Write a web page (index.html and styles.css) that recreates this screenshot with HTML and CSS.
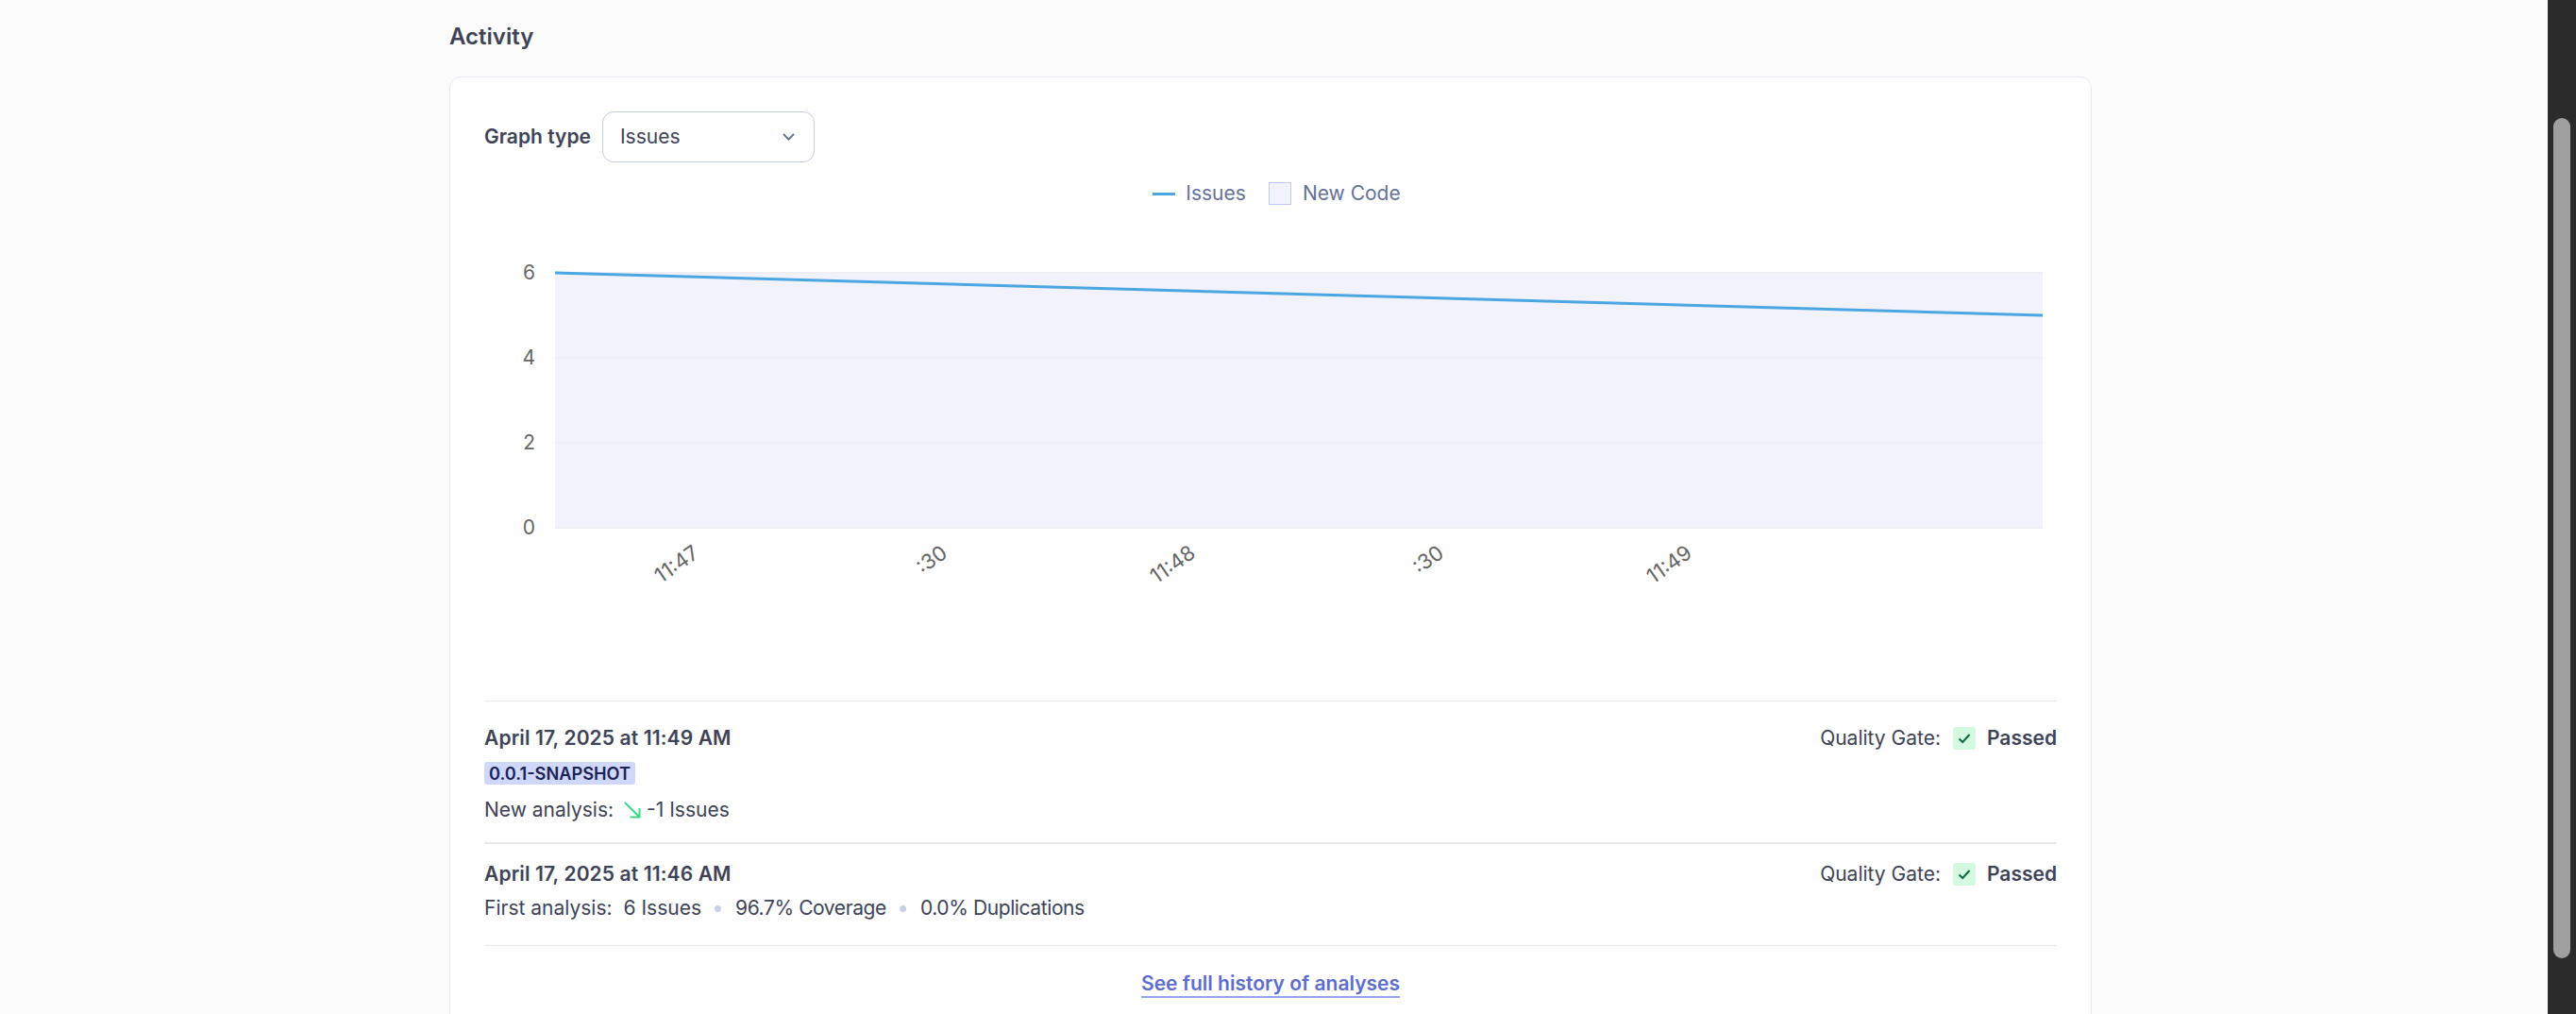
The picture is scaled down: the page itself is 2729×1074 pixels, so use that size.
FILE: index.html
```html
<!DOCTYPE html>
<html lang="en">
<head>
  <meta charset="UTF-8">
  <title>Activity</title>
  <link rel="stylesheet" href="styles.css">
</head>
<body>
  <main class="page">
    <h2 class="title">Activity</h2>
    <section class="card">
      <div class="graph-type">
        <label class="graph-label">Graph type</label>
        <div class="select">
          <span>Issues</span>
          <svg class="chevron" width="13" height="8" viewBox="0 0 13 8"><path d="M1 1 6.500 6.600 12 1" fill="none" stroke="#5f6f96" stroke-width="1.8"/></svg>
        </div>
      </div>

      <div class="legend">
        <span class="legend-line"></span>
        <span class="legend-text">Issues</span>
        <span class="legend-box"></span>
        <span class="legend-text">New Code</span>
      </div>

      <svg class="chart" width="1667" height="522" viewBox="0 0 1667 522">
        <rect x="75" y="69" width="1576" height="271" fill="#f1f2fc"/>
        <g stroke="#eeeef3" stroke-width="2">
          <line x1="75" y1="69" x2="1651" y2="69"/>
          <line x1="75" y1="159" x2="1651" y2="159"/>
          <line x1="75" y1="249" x2="1651" y2="249"/>
          <line x1="75" y1="339" x2="1651" y2="339"/>
        </g>
        <line x1="75" y1="69" x2="1651" y2="114" stroke="#4ba6e1" stroke-width="3"/>
        <g class="y-labels" text-anchor="end">
          <text x="54" y="76">6</text>
          <text x="54" y="166">4</text>
          <text x="54" y="256">2</text>
          <text x="54" y="346">0</text>
        </g>
        <g class="x-labels" text-anchor="end">
          <text transform="translate(229,369) rotate(-35)">11:47</text>
          <text transform="translate(492,369) rotate(-35)">:30</text>
          <text transform="translate(755,369) rotate(-35)">11:48</text>
          <text transform="translate(1018,369) rotate(-35)">:30</text>
          <text transform="translate(1281,369) rotate(-35)">11:49</text>
        </g>
      </svg>

      <ul class="analyses">
        <li class="analysis analysis-first">
          <div class="analysis-head">
            <strong class="analysis-date">April 17, 2025 at 11:49 AM</strong>
            <div class="gate">
              <span>Quality Gate:</span>
              <span class="gate-badge"><svg width="14" height="12" viewBox="0 0 14 12"><path d="M1.500 6.500 5.200 10 12.500 2" fill="none" stroke="#0f6b3e" stroke-width="2"/></svg></span>
              <strong>Passed</strong>
            </div>
          </div>
          <div class="version">0.0.1-SNAPSHOT</div>
          <div class="events events-new">
            <span>New analysis:</span>
            <svg class="trend" width="18" height="18" viewBox="0 0 18 18"><path d="M1 1 16.500 16.500M16.500 7V16.500H6.500" fill="none" stroke="#37d985" stroke-width="2"/></svg>
            <span>-1 Issues</span>
          </div>
        </li>
        <li class="analysis analysis-second">
          <div class="analysis-head">
            <strong class="analysis-date">April 17, 2025 at 11:46 AM</strong>
            <div class="gate">
              <span>Quality Gate:</span>
              <span class="gate-badge"><svg width="14" height="12" viewBox="0 0 14 12"><path d="M1.500 6.500 5.200 10 12.500 2" fill="none" stroke="#0f6b3e" stroke-width="2"/></svg></span>
              <strong>Passed</strong>
            </div>
          </div>
          <div class="events events-first">
            <span>First analysis:</span>
            <span>6 Issues</span>
            <i class="dot"></i>
            <span class="metric">96.7% Coverage</span>
            <i class="dot"></i>
            <span class="metric">0.0% Duplications</span>
          </div>
        </li>
      </ul>

      <div class="history">
        <a class="history-link" href="#">See full history of analyses</a>
      </div>
    </section>
  </main>

  <div class="scrollbar"><div class="scrollbar-thumb"></div></div>
</body>
</html>
```

FILE: styles.css
```css
html,
body {
  height: 100%;
}

body {
  margin: 0;
  display: flex;
  overflow: hidden;
  background-color: #fcfcfc;
  color: #3e4357;
  font-family: Inter, "Noto Sans", sans-serif;
  font-size: 21px;
  line-height: 30px;
}

.page {
  flex: 1;
  min-width: 0;
  padding: 0 483px 0 476px;
}

.title {
  margin: 0;
  padding: 21px 0 24px;
  font-size: 24px;
  line-height: 36px;
  font-weight: 600;
}

.card {
  height: 1100px;
  padding: 36px;
  background-color: #fff;
  border: 1px solid #e6e8f4;
  border-radius: 12px;
}

.graph-type {
  display: flex;
  align-items: center;
  gap: 12px;
}

.graph-label {
  font-weight: 600;
}

.select {
  width: 225px;
  height: 54px;
  box-sizing: border-box;
  padding: 0 20px 0 18px;
  display: flex;
  align-items: center;
  justify-content: space-between;
  border: 1px solid #c5cce6;
  border-radius: 12px;
}

.legend {
  margin-top: 18px;
  padding-left: 13px;
  display: flex;
  justify-content: center;
  align-items: center;
  color: #64719b;
}

.legend-line {
  width: 24px;
  height: 3px;
  background-color: #4ba6e1;
  margin-right: 11px;
}

.legend-box {
  width: 24px;
  height: 24px;
  box-sizing: border-box;
  margin: 0 12px 0 24px;
  background-color: #f1f2fc;
  border: 1px solid #bfc6fb;
}

.chart {
  display: block;
}

.y-labels text,
.x-labels text {
  font-family: Inter, sans-serif;
  font-size: 21px;
  fill: #666;
}

.x-labels text {
  font-size: 22px;
}

.analyses {
  list-style: none;
  margin: 0;
  padding: 0;
}

.analysis {
  border-top: 1px solid #e9e9ec;
}

.analysis-first {
  padding: 24px 0 19px;
}

.analysis-second {
  border-top-width: 2px;
  padding: 17px 0 24px;
  border-bottom: 1px solid #e9e9ec;
}

.analysis-head {
  display: flex;
  justify-content: space-between;
}

.analysis-head strong {
  font-weight: 600;
}

.analysis-date {
  letter-spacing: 0.13px;
}

.gate {
  display: flex;
  align-items: center;
}

.gate-badge {
  width: 24px;
  height: 24px;
  margin: 0 12px 0 13px;
  display: flex;
  align-items: center;
  justify-content: center;
  background-color: #d3f9e0;
  border-radius: 3px;
}

.version {
  width: fit-content;
  margin-top: 10px;
  padding: 0 5px;
  height: 24px;
  line-height: 24px;
  font-size: 18.200px;
  font-weight: 600;
  color: #1b2354;
  background-color: #d0d7fc;
  border-radius: 3px;
}

.events {
  display: flex;
  align-items: center;
}

.events-new {
  margin-top: 12px;
}

.events-first {
  margin-top: 6px;
}

.events-first span:first-child {
  margin-right: 12px;
}

.metric {
  letter-spacing: -0.4px;
}

.trend {
  margin: 0 6px 0 11px;
}

.dot {
  width: 7px;
  height: 7px;
  margin: 0 15px 0 14px;
  border-radius: 50%;
  background-color: #c9d0e4;
}

.history {
  margin-top: 25px;
  text-align: center;
}

.history-link {
  color: #5d6cd0;
  font-weight: 600;
  text-decoration: none;
  padding-bottom: 1px;
  border-bottom: 2px solid #96a4ee;
}

.scrollbar {
  flex: none;
  width: 30px;
  background-color: #2b2b2b;
  padding: 125px 6px 0;
  box-sizing: border-box;
}

.scrollbar-thumb {
  height: 890px;
  background-color: #9f9f9f;
  border-radius: 9px;
}
```
